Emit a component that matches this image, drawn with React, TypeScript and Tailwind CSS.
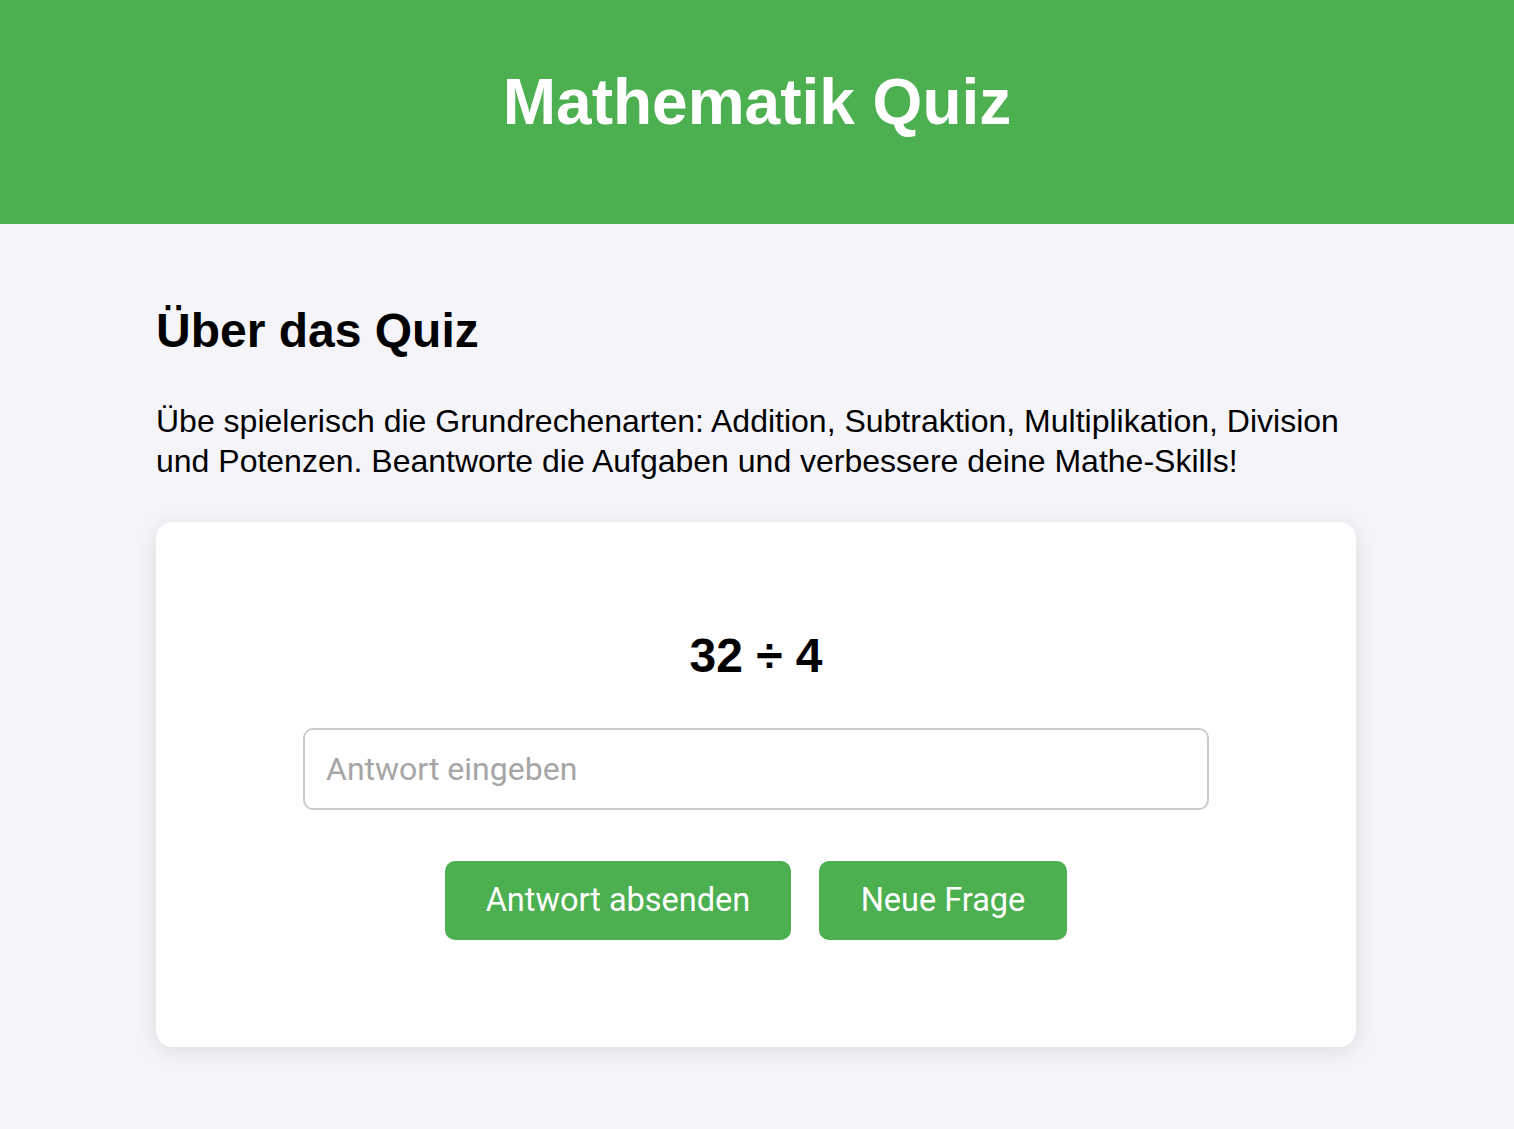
import React, { useState } from 'react'

const sans = { fontFamily: '"Liberation Sans", Arial, sans-serif' }
const ui = { fontFamily: 'Roboto, "Noto Sans", sans-serif' }

export default function App() {
  const [answer, setAnswer] = useState('')

  return (
    <div className="min-h-[1129px] bg-[#f4f4f9] text-black" style={sans}>
      {/* Header */}
      <header className="h-[224px] bg-[#4caf50] pt-[67px] text-center">
        <h1 className="text-[64px] font-bold leading-[71.5px] text-white">Mathematik Quiz</h1>
      </header>

      <main className="ml-[156px] w-[1200px] pt-[80px]">
        <h2 className="text-[48px] font-bold leading-[53.6px]">Über das Quiz</h2>
        <p className="mt-[43px] text-[32px] leading-[40px]">
          Übe spielerisch die Grundrechenarten: Addition, Subtraktion, Multiplikation, Division
          und Potenzen. Beantworte die Aufgaben und verbessere deine Mathe-Skills!
        </p>

        {/* Quiz card */}
        <div className="mt-[41px] flex flex-col items-center rounded-[16px] bg-white pt-[107px] pb-[107px] shadow-[0_4px_20px_rgba(0,0,0,0.1)]">
          <div className="text-[48px] font-bold leading-[53.6px]">32 ÷ 4</div>
          <input
            type="text"
            value={answer}
            onChange={(e) => setAnswer(e.target.value)}
            placeholder="Antwort eingeben"
            className="mt-[46px] h-[82px] w-[906px] rounded-[10px] border-2 border-[#cccccc] bg-white px-[21px] text-[32px] text-black outline-none placeholder:text-[#a6a6a6]"
            style={ui}
          />
          <div className="mt-[51px] flex gap-[28px]" style={ui}>
            <button className="flex h-[79px] w-[346px] items-center justify-center rounded-[10px] bg-[#4caf50] text-[32.5px] text-white">
              Antwort absenden
            </button>
            <button className="flex h-[79px] w-[248px] items-center justify-center rounded-[10px] bg-[#4caf50] text-[32.5px] text-white">
              Neue Frage
            </button>
          </div>
        </div>
      </main>
    </div>
  )
}
